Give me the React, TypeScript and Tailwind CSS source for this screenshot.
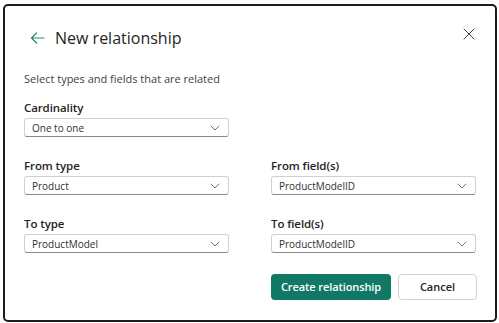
import { X } from 'lucide-react';

function Chevron() {
  return (
    <svg width="10" height="6" viewBox="0 0 10 6" fill="none" className="text-[#707070]">
      <path d="M1 1l4 4 4-4" stroke="currentColor" strokeWidth="1" strokeLinecap="round" strokeLinejoin="round" />
    </svg>
  );
}

function Field({ label, value }: { label: string; value: string }) {
  return (
    <div>
      <div className="text-[11.5px] leading-[15px] font-semibold tracking-[-0.1px] text-[#242424]">{label}</div>
      <div className="mt-[3px] h-[19px] flex items-center justify-between pl-[7px] pr-[8px] bg-white border border-[#d1d1d1] border-b-[#8a8a8a] rounded-[3px]">
        <span className="text-[10px] text-[#303030] leading-none">{value}</span>
        <Chevron />
      </div>
    </div>
  );
}

export default function App() {
  return (
    <main className="min-h-screen bg-white font-['Open_Sans',sans-serif] pt-[4px] pl-[3px]">
      <div className="w-[494px] h-[318px] bg-white border-2 border-[#1c1c1c] rounded-[5px] pl-[19px] pr-[17px] pt-[21px]">
        <div className="h-[22px] flex items-center">
          <svg width="15" height="12" viewBox="0 0 15 12" fill="none" className="ml-[6px] text-[#2d8577]">
            <path d="M14 6H1.5M6.5 1L1.5 6l5 5" stroke="currentColor" strokeWidth="1.2" strokeLinecap="round" strokeLinejoin="round" />
          </svg>
          <h1 className="ml-[10px] text-[16px] leading-[22px] font-medium text-[#242424]">New relationship</h1>
          <button className="ml-auto -mr-[1px] -mt-[8px] text-[#424242]">
            <X className="w-[20px] h-[20px]" strokeWidth={1.2} />
          </button>
        </div>

        <p className="mt-[22px] text-[11px] leading-[16px] text-[#424242]">Select types and fields that are related</p>

        <div className="mt-[13px] grid grid-cols-2 gap-x-[42px] w-[452px]">
          <Field label="Cardinality" value="One to one" />
        </div>

        <div className="mt-[21px] grid grid-cols-2 gap-x-[42px] w-[452px]">
          <Field label="From type" value="Product" />
          <Field label="From field(s)" value="ProductModelID" />
        </div>

        <div className="mt-[21px] grid grid-cols-2 gap-x-[42px] w-[452px]">
          <Field label="To type" value="ProductModel" />
          <Field label="To field(s)" value="ProductModelID" />
        </div>

        <div className="mt-[21px] w-[453px] flex justify-end gap-[7px]">
          <button className="w-[120px] h-[26px] rounded-[4px] bg-[#117865] text-white text-[11px] font-semibold tracking-[-0.1px]">
            Create relationship
          </button>
          <button className="w-[79px] h-[26px] rounded-[4px] bg-white border border-[#d1d1d1] text-[#242424] text-[11px] font-semibold">
            Cancel
          </button>
        </div>
      </div>
    </main>
  );
}
